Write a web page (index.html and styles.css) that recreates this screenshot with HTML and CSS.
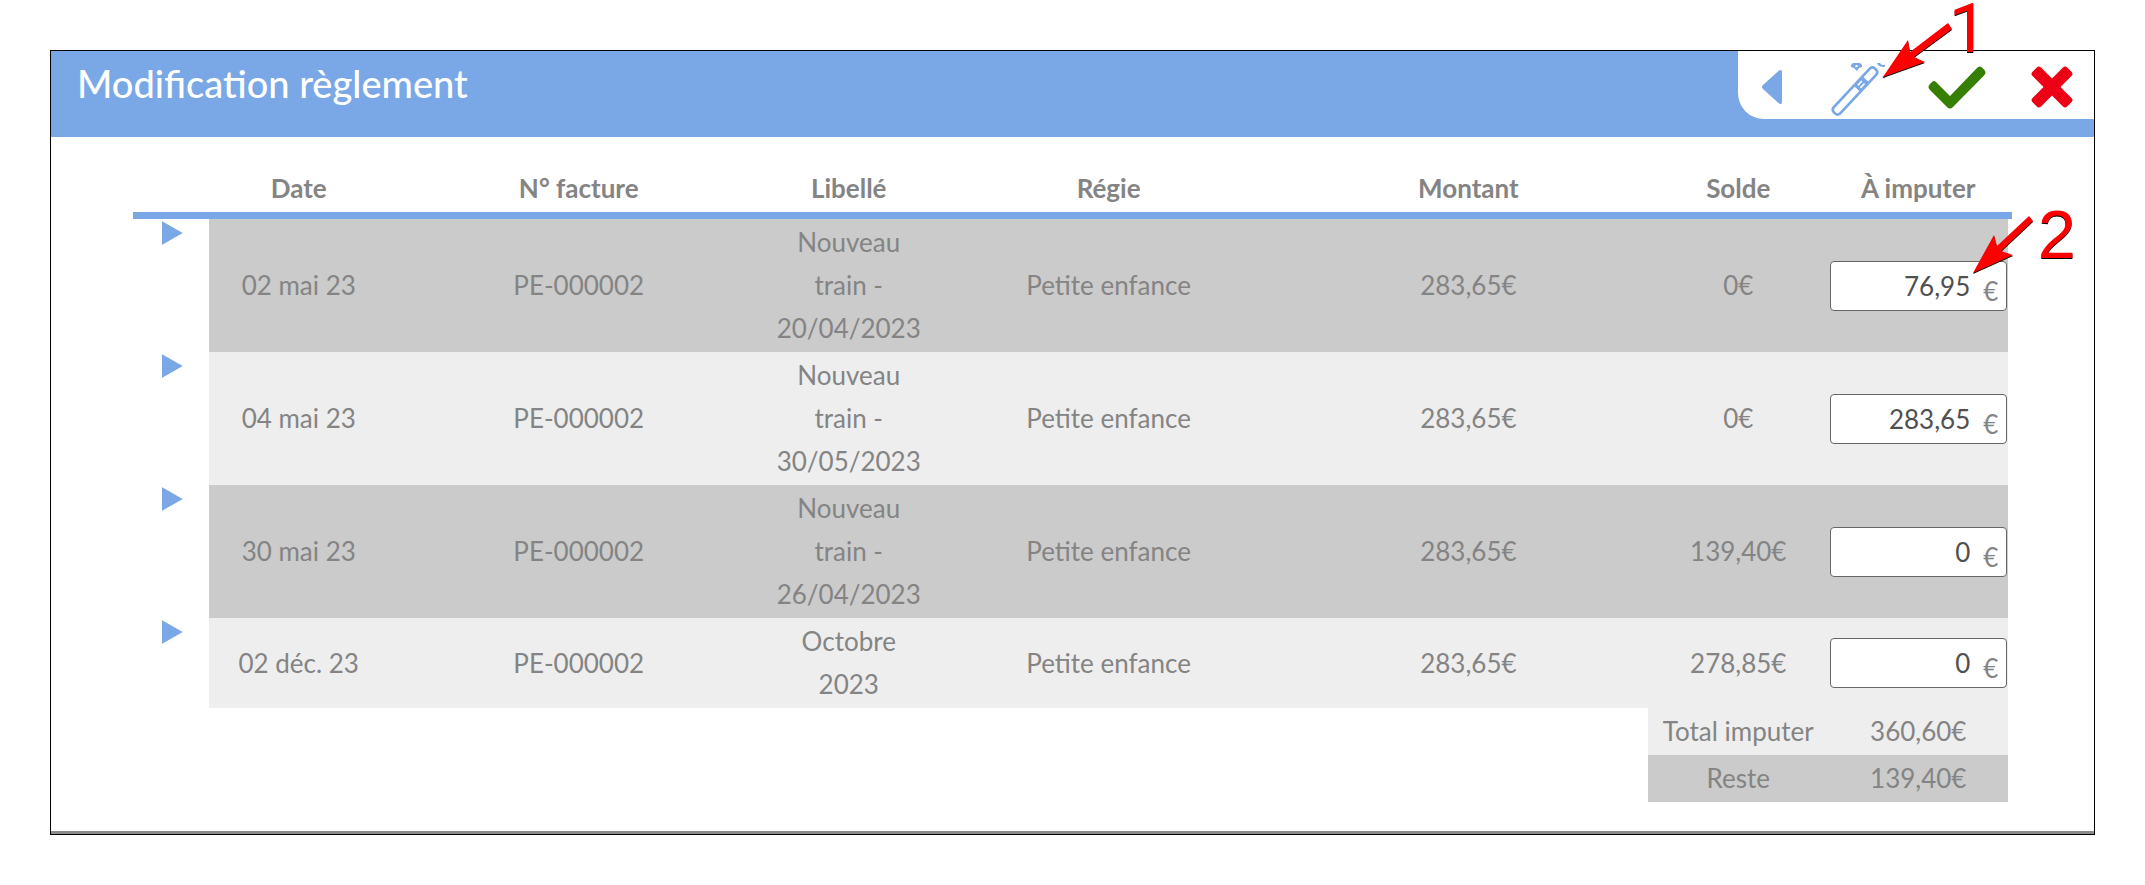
FILE: index.html
```html
<!DOCTYPE html>
<html lang="fr">
  <head>
    <meta charset="UTF-8" />
    <meta name="viewport" content="width=device-width, initial-scale=1.0" />
    <title>Modification règlement</title>
    <link rel="stylesheet" href="styles.css">
  </head>
  <body>
    <main class="fenetre">
      <header class="entete">
        <h1>Modification règlement</h1>
        <div class="outils">
          <button type="button" class="retour" aria-label="Retour">
            <svg width="20" height="34" viewBox="0 0 20 34"><path d="M17 0.500Q20 -1 20 2V32Q20 35 17 33.500L1 19Q-1 17 1 15Z" fill="#7aa8e6"/></svg>
          </button>
          <button type="button" class="baguette" aria-label="Imputer automatiquement">
            <svg width="54" height="54" viewBox="0 0 54 54">
              <g transform="translate(27 31) rotate(43)">
                <rect x="-4.500" y="-30" width="9" height="60" rx="3.500" fill="none" stroke="#7aa8e6" stroke-width="2.700"/>
                <rect x="-5" y="-16" width="10" height="13" fill="#7aa8e6"/>
                <path d="M-1.800 -12v6M1.800 -12v6" stroke="#fff" stroke-width="1.600"/>
              </g>
              <path d="M25 3h7l2 2v2l-3 1-2 3-3-3-3-1V5zM28 5l-1 2h3l-1-2z" fill="#7aa8e6" fill-rule="evenodd"/>
              <path d="M49 3h3c1 2 3 2 5 2v2c-4 0-7-1-8-4z" fill="#7aa8e6"/>
              <circle cx="56" cy="17" r="1.500" fill="#7aa8e6"/>
            </svg>
          </button>
          <button type="button" class="valider" aria-label="Valider">
            <svg width="58" height="44" viewBox="0 0 58 44"><path d="M8 17L22 31L49 3Q51.500 0 54.500 3L56 4.500Q59 7.500 56 10.500L25 42Q22 45 19 42L2 25Q-1 22 2 19L4 17Q6 15 8 17Z" fill="#358000"/></svg>
          </button>
          <button type="button" class="fermer" aria-label="Fermer">
            <svg width="40" height="40" viewBox="0 0 40 40"><g transform="translate(20 20) rotate(45)" fill="#ec0016"><rect x="-24.500" y="-6" width="49" height="12" rx="3"/><rect x="-6" y="-24.500" width="12" height="49" rx="3"/></g></svg>
          </button>
        </div>
      </header>

      <table class="factures">
        <colgroup>
          <col class="c-fleche">
          <col class="c-date">
          <col class="c-facture">
          <col class="c-libelle">
          <col>
          <col>
          <col class="c-solde">
          <col class="c-imputer">
        </colgroup>
        <thead>
          <tr>
            <th></th>
            <th>Date</th>
            <th>N° facture</th>
            <th>Libellé</th>
            <th>Régie</th>
            <th>Montant</th>
            <th>Solde</th>
            <th>À imputer</th>
          </tr>
        </thead>
        <tbody>
          <tr>
            <td><button type="button" class="deplier" aria-label="Détail"></button></td>
            <td>02 mai 23</td>
            <td>PE-000002</td>
            <td>Nouveau train - 20/04/2023</td>
            <td>Petite enfance</td>
            <td>283,65€</td>
            <td>0€</td>
            <td><label class="montant"><input type="text" value="76,95" /><span>€</span></label></td>
          </tr>
          <tr>
            <td><button type="button" class="deplier" aria-label="Détail"></button></td>
            <td>04 mai 23</td>
            <td>PE-000002</td>
            <td>Nouveau train - 30/05/2023</td>
            <td>Petite enfance</td>
            <td>283,65€</td>
            <td>0€</td>
            <td><label class="montant"><input type="text" value="283,65" /><span>€</span></label></td>
          </tr>
          <tr>
            <td><button type="button" class="deplier" aria-label="Détail"></button></td>
            <td>30 mai 23</td>
            <td>PE-000002</td>
            <td>Nouveau train - 26/04/2023</td>
            <td>Petite enfance</td>
            <td>283,65€</td>
            <td>139,40€</td>
            <td><label class="montant"><input type="text" value="0" /><span>€</span></label></td>
          </tr>
          <tr>
            <td><button type="button" class="deplier" aria-label="Détail"></button></td>
            <td>02 déc. 23</td>
            <td>PE-000002</td>
            <td>Octobre 2023</td>
            <td>Petite enfance</td>
            <td>283,65€</td>
            <td>278,85€</td>
            <td><label class="montant"><input type="text" value="0" /><span>€</span></label></td>
          </tr>
        </tbody>
        <tfoot>
          <tr>
            <td colspan="6"></td>
            <td>Total imputer</td>
            <td>360,60€</td>
          </tr>
          <tr>
            <td colspan="6"></td>
            <td>Reste</td>
            <td>139,40€</td>
          </tr>
        </tfoot>
      </table>
    </main>

    <!-- reperes de la documentation -->
    <svg class="reperes" width="445" height="300" viewBox="0 0 445 300">
      <path d="M183 77L208 40L210 52L248 23L252 29L214 57L225 62Z"/>
      <text class="un" x="249" y="52">1</text>
      <path d="M273 273L294 235L297 246L329 216L333 221L301 251L313 255Z"/>
      <text x="338" y="258">2</text>
    </svg>
  </body>
</html>
```

FILE: styles.css
```css
* {
  box-sizing: border-box;
}
body {
  position: relative;
  margin: 0;
  padding: 50px;
  background-color: white;
  color: #848484;
  font-family: Lato, "Liberation Sans", sans-serif;
  font-size: 26px;
}

.fenetre {
  border: 1px solid black;
  padding-bottom: 32px;
  box-shadow: inset 0 -3px #8c8c8c;
}

.entete {
  display: flex;
  justify-content: space-between;
  align-items: flex-start;
  height: 86px;
  background-color: #7aa8e6;
}
h1 {
  margin: 0;
  padding: 8px 26px;
  color: white;
  font-size: 38px;
  font-weight: 500;
  line-height: 48px;
}

.outils {
  display: flex;
  align-items: center;
  gap: 46px;
  height: 68px;
  padding: 4px 22px 0 24px;
  background-color: white;
  border-bottom-left-radius: 26px;
}
.outils button,
.deplier {
  display: block;
  padding: 0;
  border: 0;
  background: none;
  cursor: pointer;
}
.outils svg {
  display: block;
  overflow: visible;
}

.factures {
  width: 92%;
  margin: 28px auto 0;
  border-spacing: 0;
  table-layout: fixed;
  text-align: center;
  line-height: 43px;
}
.c-fleche {
  width: 76px;
}
.c-date,
.c-solde {
  width: 180px;
}
.c-facture {
  width: 380px;
}
.c-libelle {
  width: 160px;
}
.c-imputer {
  width: 184px;
}

th {
  padding: 2px 0;
  border-bottom: 7px solid #7aa8e6;
}
th:last-child {
  padding-right: 4px;
}
td {
  padding: 2px 0;
}
td:last-child {
  border-right: 4px solid transparent;
  background-clip: padding-box;
}
tbody tr:nth-child(odd) td,
tfoot tr:nth-child(even) td {
  background-color: #cbcbcb;
}
tbody tr:nth-child(even) td,
tfoot tr:nth-child(odd) td {
  background-color: #eee;
}
tbody tr td:first-child,
tfoot tr td:first-child {
  background: none;
}
tbody td:first-child {
  vertical-align: top;
}

.deplier {
  width: 21px;
  height: 24px;
  margin-left: 29px;
  background-color: #7aa8e6;
  clip-path: polygon(0 0, 100% 50%, 0 100%);
}

.montant {
  display: block;
  position: relative;
  margin: 0 1px 0 2px;
}
.montant input {
  display: block;
  width: 100%;
  height: 50px;
  padding: 0 36px 0 4px;
  border: 1px solid #666;
  border-radius: 4px;
  background-color: white;
  color: #505050;
  font: inherit;
  text-align: right;
}
.montant span {
  position: absolute;
  top: 9px;
  right: 9px;
}

/* fleches et numeros rouges */
.reperes {
  position: absolute;
  top: 0;
  right: 0;
  pointer-events: none;
  fill: red;
  filter: drop-shadow(0 1px 0 black);
  font-family: "Liberation Sans", Arial, sans-serif;
  font-size: 68px;
}
.reperes .un {
  font-family: Roboto, "Liberation Sans", sans-serif;
}
```
